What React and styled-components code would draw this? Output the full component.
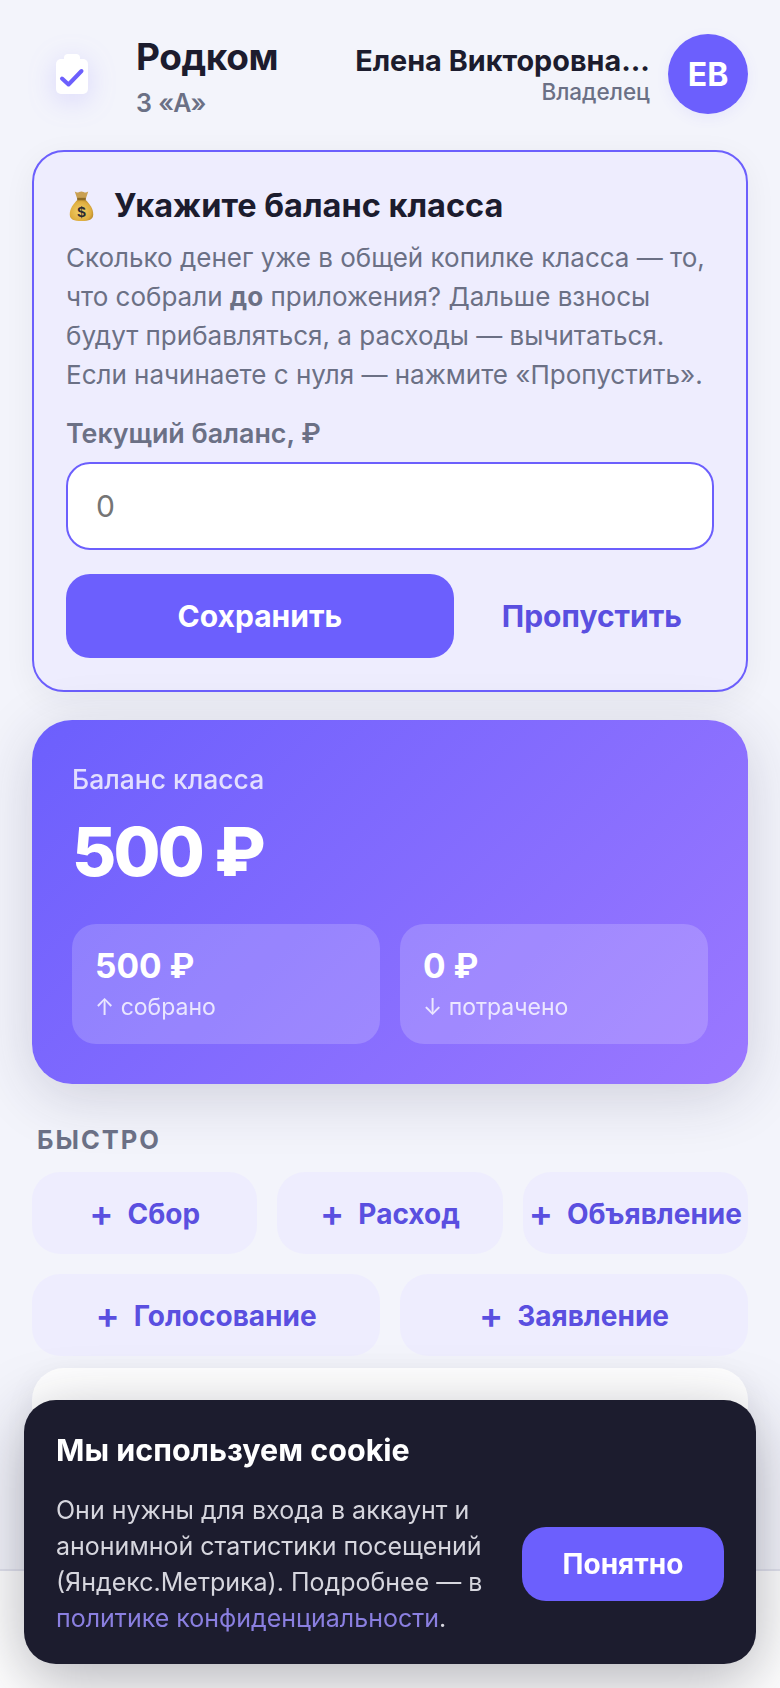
import React from "react";
import styled, { createGlobalStyle } from "styled-components";

const GlobalStyle = createGlobalStyle`
  * { box-sizing: border-box; }
  html, body { margin: 0; padding: 0; height: 100%; background: #f3f4fb; }
  body { font-family: "Inter", "Noto Sans", sans-serif; color: #1c1c2e; overflow: hidden; }
`;

const Page = styled.div`
  height: 1688px;
  padding: 34px 32px 0;
  overflow: hidden;
`;

const Header = styled.header`
  display: flex;
  align-items: center;
  justify-content: space-between;
  height: 80px;
  margin-bottom: 36px;
`;

const Brand = styled.div`
  display: flex;
  align-items: center;
  gap: 24px;
`;

const LogoBox = styled.div`
  width: 80px;
  height: 80px;
  display: flex;
  align-items: center;
  justify-content: center;
  svg {
    filter: drop-shadow(0 6px 14px rgba(108, 95, 253, 0.2));
  }
`;

const BrandText = styled.div`
  display: flex;
  flex-direction: column;
`;

const BrandName = styled.div`
  font-size: 37px;
  font-weight: 700;
  letter-spacing: -0.4px;
  line-height: 46px;
  margin-top: 6px;
`;

const ClassName = styled.div`
  font-size: 25px;
  font-weight: 600;
  color: #6b7085;
  line-height: 36px;
  margin-top: 5px;
`;

const User = styled.div`
  display: flex;
  align-items: center;
  gap: 18px;
`;

const UserText = styled.div`
  text-align: right;
`;

const UserName = styled.div`
  font-size: 28.8px;
  font-weight: 700;
  line-height: 34px;
  margin-top: 2px;
`;

const UserRole = styled.div`
  font-size: 22.5px;
  font-weight: 500;
  color: #6b7085;
  line-height: 28px;
`;

const Avatar = styled.div`
  width: 80px;
  height: 80px;
  border-radius: 50%;
  background: #6c5ffd;
  color: #fff;
  font-size: 32px;
  font-weight: 700;
  display: flex;
  align-items: center;
  justify-content: center;
  box-shadow: 0 4px 14px rgba(108, 95, 253, 0.08);
`;

const SetupCard = styled.section`
  background: #eeedfe;
  border: 2px solid #6c5ffd;
  border-radius: 32px;
  padding: 32px;
  height: 542px;
  margin-bottom: 28px;
  box-shadow: 0 8px 32px rgba(28, 28, 46, 0.06);
`;

const SetupTitle = styled.h2`
  display: flex;
  align-items: center;
  gap: 20px;
  margin: 0 0 10px;
  font-size: 32.5px;
  font-weight: 700;
  line-height: 44px;
  svg {
    margin-left: 3px;
  }
`;

const SetupText = styled.p`
  margin: 0 0 21px;
  font-size: 26px;
  line-height: 39px;
  color: #6b7085;
  b { font-weight: 700; }
`;

const FieldLabel = styled.label`
  display: block;
  font-size: 26.8px;
  font-weight: 600;
  color: #6b7085;
  line-height: 36px;
  margin-bottom: 11px;
`;

const AmountInput = styled.input`
  display: block;
  width: 100%;
  height: 88px;
  border: 2px solid #6c5ffd;
  border-radius: 24px;
  padding: 0 28px;
  background: #fff;
  font-family: inherit;
  font-size: 30px;
  margin-bottom: 24px;
  outline: none;
  &::placeholder { color: #757575; opacity: 1; }
`;

const Actions = styled.div`
  display: flex;
  align-items: center;
  gap: 16px;
`;

const PrimaryButton = styled.button`
  border: none;
  background: #6c5ffd;
  color: #fff;
  border-radius: 24px;
  font-family: inherit;
  font-size: ${(p) => p.$size}px;
  font-weight: 700;
  flex: ${(p) => p.$flex || "none"};
  height: ${(p) => p.$height}px;
  width: ${(p) => p.$width || "auto"};
`;

const GhostButton = styled.button`
  border: none;
  background: none;
  color: #5a4fe0;
  font-family: inherit;
  font-size: 30px;
  font-weight: 700;
  padding: 0 32px;
  height: 84px;
  white-space: nowrap;
`;

const BalanceCard = styled.section`
  height: 364px;
  border-radius: 40px;
  padding: 40px;
  margin-bottom: 40px;
  color: #fff;
  background: linear-gradient(135deg, #6c5ffd 0%, #9b78ff 100%);
  box-shadow: 0 12px 60px rgba(40, 40, 80, 0.18);
`;

const BalanceLabel = styled.div`
  font-size: 26.5px;
  font-weight: 500;
  line-height: 36px;
  opacity: 0.8;
  margin-top: 1px;
`;

const BalanceValue = styled.div`
  font-size: 68px;
  font-weight: 800;
  letter-spacing: -2.8px;
  line-height: 84px;
  margin: 12px 0 31px;
`;

const Stats = styled.div`
  display: grid;
  grid-template-columns: 1fr 1fr;
  gap: 20px;
`;

const Stat = styled.div`
  height: 120px;
  border-radius: 24px;
  padding: 20px 23px;
  background: rgba(255, 255, 255, 0.18);
`;

const StatValue = styled.div`
  font-size: 33.5px;
  font-weight: 700;
  line-height: 44px;
`;

const StatLabel = styled.div`
  font-size: 23px;
  line-height: 34px;
  margin-top: 2px;
  opacity: 0.8;
`;

const SectionTitle = styled.h3`
  margin: 0 0 16px 5px;
  font-size: 25.5px;
  font-weight: 700;
  letter-spacing: 2px;
  color: #6b7085;
  line-height: 32px;
`;

const QuickRow = styled.div`
  display: grid;
  grid-template-columns: repeat(${(p) => p.$cols}, 1fr);
  gap: 20px;
  margin-bottom: 20px;
`;

const QuickButton = styled.button`
  display: flex;
  align-items: center;
  justify-content: center;
  gap: 14px;
  height: 82px;
  padding: 2px 0 0;
  border: none;
  border-radius: 28px;
  background: #eeedfe;
  color: #5a4fe0;
  font-family: inherit;
  font-size: 28px;
  font-weight: 700;
  white-space: nowrap;
`;

const PlusMark = styled.span`
  font-size: 36px;
  font-weight: 600;
  line-height: 1;
  margin-top: -2px;
`;

const NextCard = styled.section`
  height: 300px;
  margin-top: -8px;
  border-radius: 32px;
  background: #fff;
  box-shadow: 0 8px 32px rgba(28, 28, 46, 0.06);
`;

const BottomNav = styled.nav`
  position: fixed;
  left: 0;
  right: 0;
  bottom: 0;
  height: 119px;
  background: #fff;
  border-top: 2px solid #e2e3ee;
`;

const CookieBanner = styled.aside`
  position: fixed;
  left: 24px;
  right: 24px;
  bottom: 24px;
  height: 264px;
  padding: 30px 32px;
  border-radius: 32px;
  background: #1c1c2e;
  color: #fff;
  box-shadow: 0 16px 64px rgba(28, 28, 46, 0.34);
`;

const CookieTitle = styled.div`
  font-size: 30.5px;
  font-weight: 700;
  line-height: 40px;
  margin-bottom: 22px;
`;

const CookieBody = styled.div`
  display: flex;
  align-items: center;
  justify-content: space-between;
`;

const CookieText = styled.p`
  margin: 0;
  width: 450px;
  font-size: 25px;
  line-height: 36px;
  color: #d6d6de;
`;

const CookieLink = styled.a`
  color: #8a7fe0;
`;

const ClipboardIcon = () => (
  <svg width="32" height="40" viewBox="0 0 32 40">
    <rect x="8" y="0" width="16" height="10" rx="4" fill="#fff" />
    <rect x="0" y="5" width="32" height="35" rx="5" fill="#fff" />
    <path d="M6 24.5l6.5 6L25.5 17" fill="none" stroke="#6c5ffd" strokeWidth="4" strokeLinecap="round" strokeLinejoin="round" />
  </svg>
);

const MoneyBagIcon = () => (
  <svg width="25" height="32" viewBox="0 0 26 32">
    <defs>
      <radialGradient id="bagFill" cx="45%" cy="55%" r="65%">
        <stop offset="0%" stopColor="#f2d06a" />
        <stop offset="70%" stopColor="#dfae3f" />
        <stop offset="100%" stopColor="#a87a24" />
      </radialGradient>
    </defs>
    <path d="M6 1c2 1.3 3 1.3 4.500.5 1.400-.8 3.300-.8 4.700 0 1.500.8 2.800.8 4.800-.5L17.500 8.500h-9z" fill="#c9a052" />
    <path d="M9 9.500C5 13 .5 19 .8 25c.3 5 4.200 6.500 12.200 6.500S24.900 30 25.200 25C25.500 19 21 13 17 9.500z" fill="url(#bagFill)" />
    <path d="M8.500 7.500h9v2.500h-9z" fill="#8d6a24" />
    <text x="13" y="27" textAnchor="middle" fontFamily="Liberation Sans" fontWeight="700" fontSize="16" fill="#2b2a30">$</text>
  </svg>
);

const quickTop = ["Сбор", "Расход", "Объявление"];
const quickBottom = ["Голосование", "Заявление"];

const App = () => {
  return (
    <>
      <GlobalStyle />
      <Page>
        <Header>
          <Brand>
            <LogoBox>
              <ClipboardIcon />
            </LogoBox>
            <BrandText>
              <BrandName>Родком</BrandName>
              <ClassName>3 «А»</ClassName>
            </BrandText>
          </Brand>
          <User>
            <UserText>
              <UserName>Елена Викторовна...</UserName>
              <UserRole>Владелец</UserRole>
            </UserText>
            <Avatar>ЕВ</Avatar>
          </User>
        </Header>

        <SetupCard>
          <SetupTitle>
            <MoneyBagIcon />
            Укажите баланс класса
          </SetupTitle>
          <SetupText>
            Сколько денег уже в общей копилке класса — то, что собрали <b>до</b> приложения? Дальше взносы будут
            прибавляться, а расходы — вычитаться. Если начинаете с нуля — нажмите «Пропустить».
          </SetupText>
          <FieldLabel>Текущий баланс, ₽</FieldLabel>
          <AmountInput placeholder="0" />
          <Actions>
            <PrimaryButton $flex="1" $height={84} $size={30}>Сохранить</PrimaryButton>
            <GhostButton>Пропустить</GhostButton>
          </Actions>
        </SetupCard>

        <BalanceCard>
          <BalanceLabel>Баланс класса</BalanceLabel>
          <BalanceValue>500 ₽</BalanceValue>
          <Stats>
            <Stat>
              <StatValue>500 ₽</StatValue>
              <StatLabel>↑ собрано</StatLabel>
            </Stat>
            <Stat>
              <StatValue>0 ₽</StatValue>
              <StatLabel>↓ потрачено</StatLabel>
            </Stat>
          </Stats>
        </BalanceCard>

        <SectionTitle>БЫСТРО</SectionTitle>
        <QuickRow $cols={3}>
          {quickTop.map((label) => (
            <QuickButton key={label}>
              <PlusMark>+</PlusMark>
              <span>{label}</span>
            </QuickButton>
          ))}
        </QuickRow>
        <QuickRow $cols={2}>
          {quickBottom.map((label) => (
            <QuickButton key={label}>
              <PlusMark>+</PlusMark>
              <span>{label}</span>
            </QuickButton>
          ))}
        </QuickRow>
        <NextCard />
      </Page>

      <BottomNav />

      <CookieBanner>
        <CookieTitle>Мы используем cookie</CookieTitle>
        <CookieBody>
          <CookieText>
            Они нужны для входа в аккаунт и анонимной статистики посещений (Яндекс.Метрика). Подробнее — в{" "}
            <CookieLink>политике конфиденциальности</CookieLink>.
          </CookieText>
          <PrimaryButton $height={74} $width="202px" $size={28}>Понятно</PrimaryButton>
        </CookieBody>
      </CookieBanner>
    </>
  );
};

export default App;
